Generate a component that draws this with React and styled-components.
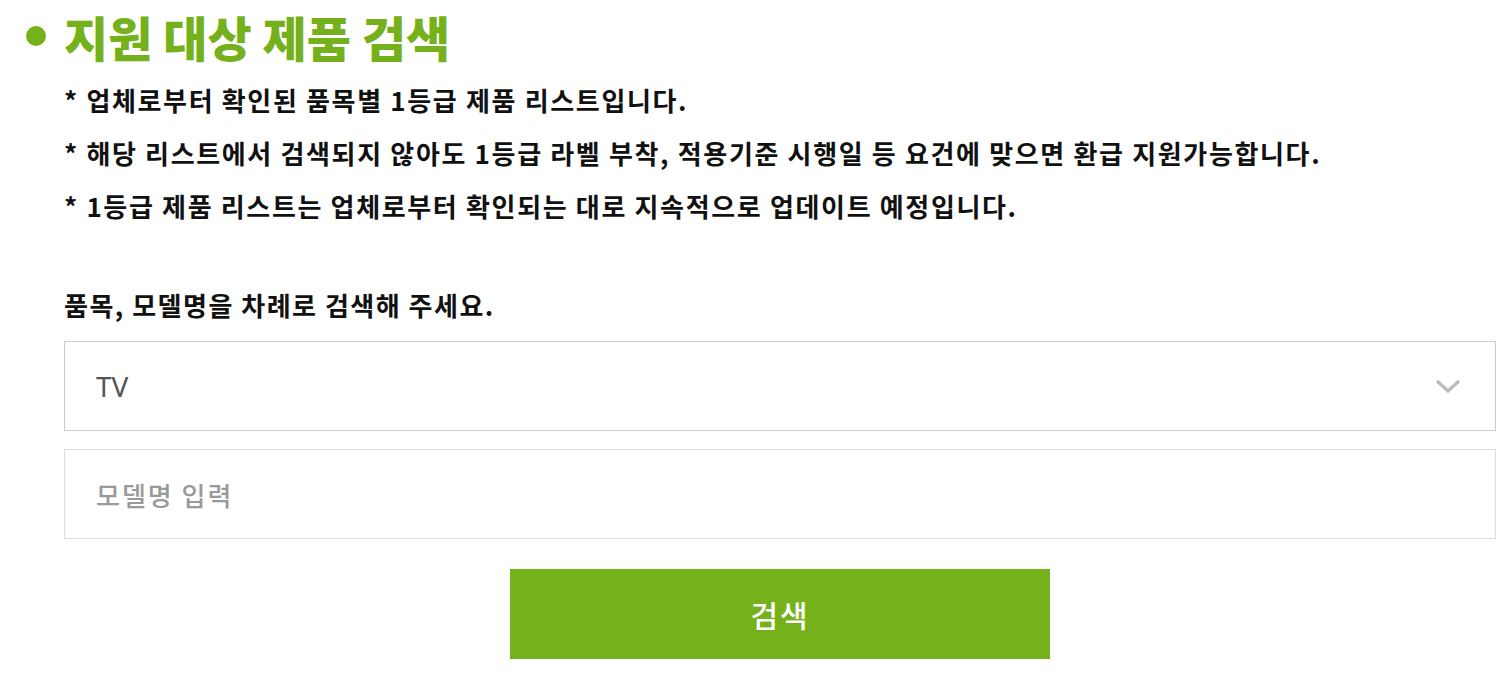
import React from "react";
import styled, { createGlobalStyle } from "styled-components";

const GlobalStyle = createGlobalStyle`
  body {
    margin: 0;
    background: #fff;
    font-family: "Noto Sans CJK KR", "Noto Sans", sans-serif;
  }
`;

const notes = [
  "* 업체로부터 확인된 품목별 1등급 제품 리스트입니다.",
  "* 해당 리스트에서 검색되지 않아도 1등급 라벨 부착, 적용기준 시행일 등 요건에 맞으면 환급 지원가능합니다.",
  "* 1등급 제품 리스트는 업체로부터 확인되는 대로 지속적으로 업데이트 예정입니다.",
];

const App = () => {
  return (
    <Page>
      <GlobalStyle />
      <Title>
        <Dot />
        지원 대상 제품 검색
      </Title>
      <Content>
        <Notes>
          {notes.map((n) => (
            <Note key={n}>{n}</Note>
          ))}
        </Notes>
        <Guide>품목, 모델명을 차례로 검색해 주세요.</Guide>
        <Select>
          <SelectValue>TV</SelectValue>
          <svg width="26" height="16" viewBox="0 0 26 16">
            <path d="M2 3 L13 13 L24 3" fill="none" stroke="#bbb" strokeWidth="3.2" />
          </svg>
        </Select>
        <Input placeholder="모델명 입력" />
        <SearchButton>검색</SearchButton>
      </Content>
    </Page>
  );
};

export default App;

const Page = styled.div`
  width: 1508px;
  padding-top: 12px;
`;

const Title = styled.h2`
  display: flex;
  align-items: center;
  gap: 18px;
  margin: 0 0 0 26px;
  height: 48px;
  font-size: 48px;
  font-weight: 900;
  color: #74b11a;
`;

const Dot = styled.span`
  width: 20px;
  height: 20px;
  border-radius: 50%;
  background: #74b11a;
`;

const Content = styled.div`
  padding: 0 12px 0 64px;
  display: flex;
  flex-direction: column;
`;

const Notes = styled.ul`
  list-style: none;
  margin: 22px 0 0;
  padding: 0;
  display: flex;
  flex-direction: column;
  gap: 17px;
`;

const Note = styled.li`
  font-size: 26px;
  line-height: 36px;
  font-weight: 700;
  color: #111;
  letter-spacing: 1.65px;
`;

const Guide = styled.p`
  margin: 63px 0 18px;
  font-size: 26px;
  line-height: 36px;
  font-weight: 600;
  color: #111;
  letter-spacing: 1.5px;
`;

const Select = styled.div`
  height: 90px;
  box-sizing: border-box;
  border: 1px solid #ccc;
  display: flex;
  align-items: center;
  justify-content: space-between;
  padding: 0 34px 0 31px;
`;

const SelectValue = styled.span`
  font-family: "Noto Sans", sans-serif;
  font-size: 28px;
  color: #555;
`;

const Input = styled.input`
  margin-top: 18px;
  height: 90px;
  box-sizing: border-box;
  border: 1px solid #ddd;
  padding: 0 31px;
  font-family: "Noto Sans CJK KR", sans-serif;
  font-size: 26px;
  font-weight: 500;
  letter-spacing: 2px;
  outline: none;
  &::placeholder {
    color: #999;
  }
`;

const SearchButton = styled.button`
  align-self: center;
  margin-top: 30px;
  width: 540px;
  height: 90px;
  border: none;
  background: #74b11a;
  color: #fff;
  font-family: "Noto Sans CJK KR", sans-serif;
  font-size: 30px;
  font-weight: 500;
  letter-spacing: 2px;
  cursor: pointer;
`;
